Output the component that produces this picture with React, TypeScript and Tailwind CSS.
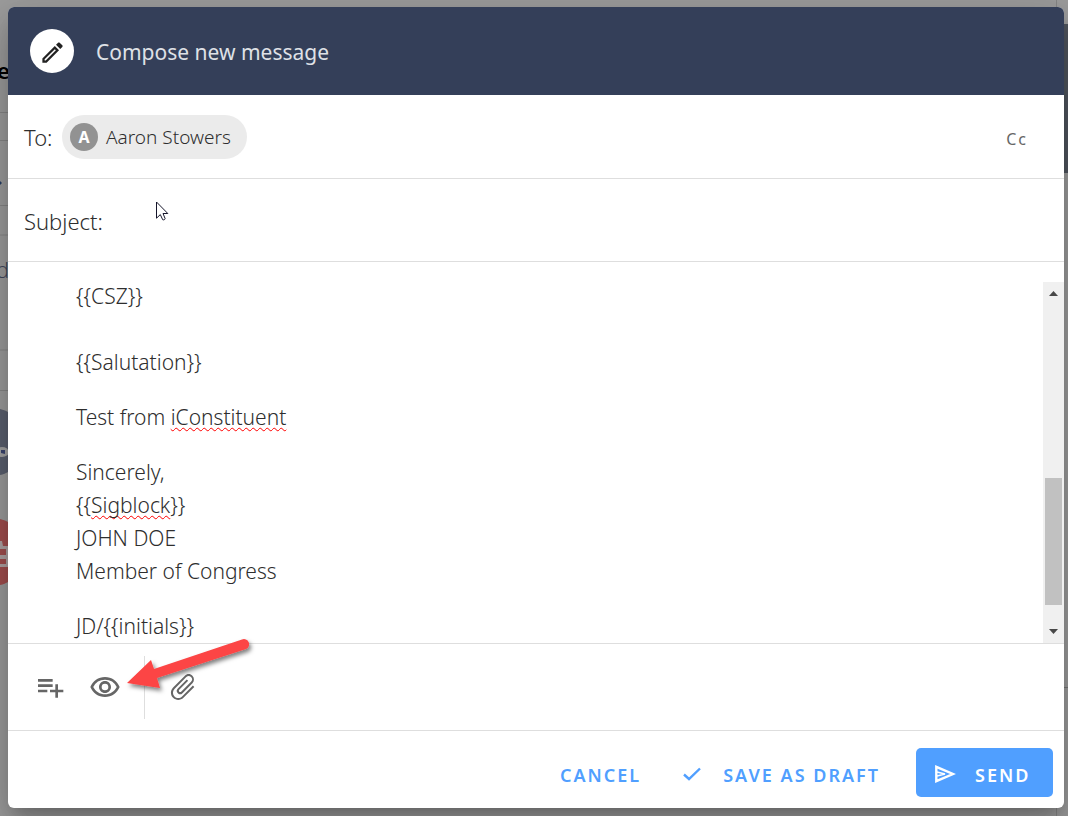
import { MdAttachFile, MdOutlineCreate, MdOutlineRemoveRedEye, MdPlaylistAdd } from 'react-icons/md';

const letter = [
    ['{{CSZ}}', ''],
    ['{{Salutation}}'],
    ['Test from iConstituent'],
    ['Sincerely,', '{{Sigblock}}', 'JOHN DOE', 'Member of Congress'],
    ['JD/{{initials}}'],
];

const misspelled = /(iConstituent|Sigblock)/;

function Line({ text }: { text: string }) {
    return (
        <span className="block h-[33px]">
            {text.split(misspelled).map((part, i) =>
                misspelled.test(part) ? (
                    <span key={i} className="underline decoration-[#ff0000] decoration-wavy decoration-1 underline-offset-2 [text-decoration-skip-ink:none]">{part}</span>
                ) : part
            )}
        </span>
    );
}

// Slice of the mailbox that stays visible behind the dialog
function Backdrop() {
    return (
        <div aria-hidden="true" className="absolute inset-0 overflow-hidden bg-[#9d9d9d]">
            <svg className="absolute top-0 left-0 h-[816px] w-2" viewBox="0 0 8 816">
                <path d="M0 112.500h8M0 140.500h8M0 205.500h8M0 235h8M0 350h8M0 390.500h8" stroke="#868686" />
                <path d="M0 181l2 2-2 2z" fill="#263e66" />
                <circle cx="-8" cy="442" r="34" fill="#5c6170" />
                <ellipse cx="2" cy="452" rx="7" ry="5" fill="#a5a5a5" />
                <path d="M1 450h4v4l-4-1z" fill="#3b4670" />
                <circle cx="-8" cy="552" r="34" fill="#a34f4f" />
                <path d="M0 541h2l1 5h5v21H0z" fill="#b0a4a4" />
                <path d="M0 549h6v6H0zM0 559h6v5H0z" fill="#a34f4f" />
            </svg>
            <span className="absolute top-[56px] -left-[3px] text-[22px] leading-7 font-semibold text-black">e</span>
            <span className="absolute top-[255px] -left-[4px] text-[22px] leading-7 font-light text-[#41475c]">d</span>
            <div className="absolute top-6 right-0 h-[149px] w-1 bg-[#51565f]" />
            <div className="absolute inset-y-0 right-[11px] w-px bg-[#868686]" />
            <div className="absolute top-[687px] right-0 h-px w-1 bg-[#777]" />
        </div>
    );
}

function Arrow() {
    return (
        <svg aria-hidden="true" className="pointer-events-none absolute -top-3 left-[112px] h-[70px] w-[144px]" viewBox="0 0 144 70">
            <defs>
                <filter id="arrow-shadow" x="-10%" y="-10%" width="120%" height="140%">
                    <feDropShadow dx="2" dy="3" stdDeviation="2" floodOpacity="0.5" />
                </filter>
            </defs>
            <path d="M7 51L31 28L34 37L122 7.500A5 5 0 0 1 126 17L37 46L40 56Z" fill="#fc4444" filter="url(#arrow-shadow)" />
        </svg>
    );
}

function Cursor() {
    return (
        <svg aria-hidden="true" className="pointer-events-none absolute top-[22px] left-[148px] h-5 w-[13px]" viewBox="0 0 13 20">
            <path d="M.5 1v16.200l3.800-3.600 2.400 5.100c1 .5 2.500-.2 2.400-1.200L7 12.500h4.800z" fill="#fff" stroke="#15152a" />
        </svg>
    );
}

function CheckIcon() {
    return (
        <svg aria-hidden="true" className="-mt-[3px] h-[14px] w-[18px]" viewBox="0 0 18 14" fill="none" stroke="currentColor" strokeWidth="2.400">
            <path d="M1 7.500l5 4.500L17 1.500" />
        </svg>
    );
}

function SendIcon() {
    return (
        <svg aria-hidden="true" className="-mt-[3px] h-[18px] w-[21px]" viewBox="0 0 21 18" fill="none" stroke="currentColor">
            <path d="M1.300 1.800v14.400L18 9z" strokeWidth="2.400" />
            <path d="M2 7l8 2-8 2" strokeWidth="1.500" />
        </svg>
    );
}

export default function App() {
    return (
        <div className="relative flex min-h-screen flex-col pt-[7px] pr-1 pb-2 pl-2 font-['Noto_Sans','Open_Sans',sans-serif] text-[#2e2e2e]">
            <Backdrop />
            <form role="dialog" aria-labelledby="compose-title" className="relative flex flex-1 flex-col rounded-md bg-white shadow-[0_11px_15px_-7px_rgba(0,0,0,0.2),0_24px_38px_3px_rgba(0,0,0,0.14),0_9px_46px_8px_rgba(0,0,0,0.12)]">
                <header className="flex h-[88px] items-center gap-[22px] rounded-t-md bg-[#343f59] px-[22px]">
                    <span className="flex size-11 items-center justify-center rounded-full bg-white pt-[2px] text-[#222]">
                        <MdOutlineCreate className="size-[27px]" />
                    </span>
                    <h1 id="compose-title" className="pt-1 text-[21px] text-[#dfe1e6]">Compose new message</h1>
                </header>

                <div className="flex h-[84px] items-center border-b border-[#dedede] pr-6 pl-4">
                    <span className="w-[38px] pt-[2px] text-[22px] font-light">To:</span>
                    <span className="flex h-11 items-center gap-2 rounded-full bg-[#ebebeb] pr-4 pl-2">
                        <span className="flex size-7 items-center justify-center rounded-full bg-[#929292] text-base font-bold text-white">A</span>
                        <span className="pt-[2px] text-[19px] font-light">Aaron Stowers</span>
                    </span>
                    <button type="button" className="ml-auto px-3 pt-1 text-base tracking-[2px] text-[#666]">Cc</button>
                </div>

                <div className="relative flex h-[83px] items-center gap-2 border-b border-[#dedede] px-4">
                    <label htmlFor="subject" className="pt-[2px] text-[22px] font-light">Subject:</label>
                    <input id="subject" type="text" className="h-10 min-w-0 flex-1 outline-none" />
                    <Cursor />
                </div>

                <div className="flex flex-1 border-b border-[#dedede] pt-5">
                    <div role="textbox" aria-label="Message" className="-mt-[2px] flex-1 overflow-hidden pl-[68px] text-[21px] leading-[33px] font-light whitespace-nowrap">
                        {letter.map((lines, i) => (
                            <p key={i} className="mb-[22px] first:mb-0 last:mb-0">
                                {lines.map((text, n) => <Line key={n} text={text} />)}
                            </p>
                        ))}
                    </div>
                    <div aria-hidden="true" className="flex w-[21px] flex-col items-center bg-[#f0f0f0] pt-[9px] pb-[9px]">
                        <svg className="h-[5px] w-[9px]" viewBox="0 0 9 5"><path d="M0 5L4.500 0L9 5z" fill="#484848" /></svg>
                        <div className="mt-auto mb-6 h-[127px] w-[17px] bg-[#c1c1c1]" />
                        <svg className="h-[5px] w-[9px]" viewBox="0 0 9 5"><path d="M0 0h9L4.500 5z" fill="#484848" /></svg>
                    </div>
                </div>

                <div className="relative flex h-[87px] items-center border-b border-[#dedede] pl-[26px] text-[#666]">
                    <button type="button" aria-label="Insert template"><MdPlaylistAdd className="size-8" /></button>
                    <button type="button" aria-label="Preview" className="ml-[23px]"><MdOutlineRemoveRedEye className="size-8" /></button>
                    <span className="ml-[23px] h-[63px] w-px bg-[#dedede]" />
                    <button type="button" aria-label="Attach file" className="ml-[22px]"><MdAttachFile className="size-8 rotate-45" /></button>
                    <Arrow />
                </div>

                <footer className="flex h-[77px] items-center justify-end pt-[6px] pr-[11px] text-[18px] font-semibold tracking-[2px] text-[#509fff]">
                    <button type="button" className="px-2 pt-[5px]">CANCEL</button>
                    <button type="button" className="ml-[26px] flex items-center gap-[22px] px-2 pt-[5px]"><CheckIcon />SAVE AS DRAFT</button>
                    <button type="submit" className="ml-7 flex h-[49px] w-[137px] items-center gap-[19px] rounded-[5px] bg-[#509fff] pt-[5px] pl-[19px] text-white">
                        <SendIcon />SEND
                    </button>
                </footer>
            </form>
        </div>
    );
}
